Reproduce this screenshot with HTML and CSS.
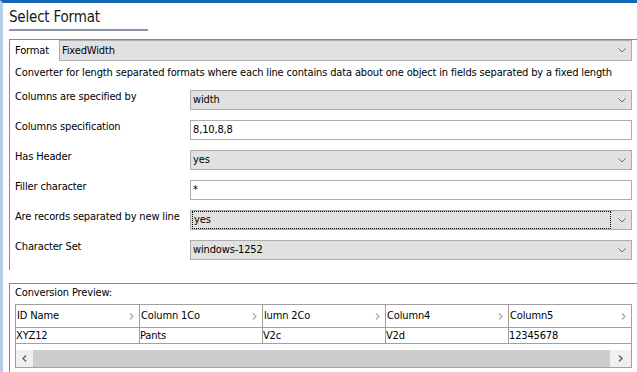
FILE: index.html
```html
<!DOCTYPE html>
<html>
<head>
<meta charset="utf-8">
<link rel="stylesheet" href="styles.css">
</head>
<body>
<div class="app">
  <h1 class="title">Select Format</h1>

  <section class="group settings">
    <div class="format-row">
      <span class="format-label">Format</span>
      <div class="select format-select">
        <span class="value">FixedWidth</span>
        <span class="arrow"><svg width="8" height="5" viewBox="0 0 8 5"><path d="M0.5 0.5 L4 4 L7.5 0.5" fill="none" stroke="#6a6a6a" stroke-width="1"/></svg></span>
      </div>
    </div>
    <p class="desc">Converter for length separated formats where each line contains data about one object in fields separated by a fixed length</p>

    <div class="form">
      <label class="label">Columns are specified by</label>
      <div class="select">
        <span class="value">width</span>
        <span class="arrow"><svg width="8" height="5" viewBox="0 0 8 5"><path d="M0.5 0.5 L4 4 L7.5 0.5" fill="none" stroke="#6a6a6a" stroke-width="1"/></svg></span>
      </div>

      <label class="label">Columns specification</label>
      <div class="input">8,10,8,8</div>

      <label class="label">Has Header</label>
      <div class="select">
        <span class="value">yes</span>
        <span class="arrow"><svg width="8" height="5" viewBox="0 0 8 5"><path d="M0.5 0.5 L4 4 L7.5 0.5" fill="none" stroke="#6a6a6a" stroke-width="1"/></svg></span>
      </div>

      <label class="label">Filler character</label>
      <div class="input">*</div>

      <label class="label">Are records separated by new line</label>
      <div class="select focused">
        <span class="value">yes</span>
        <span class="arrow"><svg width="8" height="5" viewBox="0 0 8 5"><path d="M0.5 0.5 L4 4 L7.5 0.5" fill="none" stroke="#6a6a6a" stroke-width="1"/></svg></span>
      </div>

      <label class="label">Character Set</label>
      <div class="select">
        <span class="value">windows-1252</span>
        <span class="arrow"><svg width="8" height="5" viewBox="0 0 8 5"><path d="M0.5 0.5 L4 4 L7.5 0.5" fill="none" stroke="#6a6a6a" stroke-width="1"/></svg></span>
      </div>
    </div>
  </section>

  <section class="group preview">
    <div class="preview-title">Conversion Preview:</div>
    <div class="table">
      <div class="row head">
        <div class="cell"><span>ID Name</span><svg class="hchev" width="5" height="7" viewBox="0 0 5 7"><path d="M1 0.5 L4 3.5 L1 6.5" fill="none" stroke="#a8a8a8" stroke-width="1.2"/></svg></div>
        <div class="cell"><span>Column 1Co</span><svg class="hchev" width="5" height="7" viewBox="0 0 5 7"><path d="M1 0.5 L4 3.5 L1 6.5" fill="none" stroke="#a8a8a8" stroke-width="1.2"/></svg></div>
        <div class="cell"><span>lumn 2Co</span><svg class="hchev" width="5" height="7" viewBox="0 0 5 7"><path d="M1 0.5 L4 3.5 L1 6.5" fill="none" stroke="#a8a8a8" stroke-width="1.2"/></svg></div>
        <div class="cell"><span>Column4</span><svg class="hchev" width="5" height="7" viewBox="0 0 5 7"><path d="M1 0.5 L4 3.5 L1 6.5" fill="none" stroke="#a8a8a8" stroke-width="1.2"/></svg></div>
        <div class="cell"><span>Column5</span><svg class="hchev" width="5" height="7" viewBox="0 0 5 7"><path d="M1 0.5 L4 3.5 L1 6.5" fill="none" stroke="#a8a8a8" stroke-width="1.2"/></svg></div>
      </div>
      <div class="row data">
        <div class="cell">XYZ12</div>
        <div class="cell">Pants</div>
        <div class="cell">V2c</div>
        <div class="cell">V2d</div>
        <div class="cell">12345678</div>
      </div>
      <div class="spacer"></div>
      <div class="scrollbar">
        <span class="sbtn"><svg width="5" height="7" viewBox="0 0 5 7"><path d="M4 0.5 L1 3.5 L4 6.5" fill="none" stroke="#606060" stroke-width="1.4"/></svg></span>
        <span class="track"></span>
        <span class="sbtn right"><svg width="5" height="7" viewBox="0 0 5 7"><path d="M1 0.5 L4 3.5 L1 6.5" fill="none" stroke="#606060" stroke-width="1.4"/></svg></span>
      </div>
    </div>
  </section>
</div>
</body>
</html>
```

FILE: styles.css
```css
* { box-sizing: border-box; }

html, body {
  margin: 0;
  padding: 0;
  background: #ffffff;
  overflow: hidden;
}

body {
  font-family: "DejaVu Sans Condensed", "DejaVu Sans", sans-serif;
  font-stretch: condensed;
  font-size: 11px;
  letter-spacing: -0.15px;
  color: #000000;
}

.app {
  width: 637px;
  height: 372px;
  border-top: 3px solid #1565b5;
  border-left: 3px solid #b5cde8;
  padding-left: 6px;
  overflow: hidden;
}

.title {
  margin: 0;
  width: 139px;
  padding: 4px 0 2px 0;
  font-size: 15px;
  font-weight: normal;
  line-height: 20px;
  letter-spacing: -0.2px;
  color: #1a1a1a;
  white-space: nowrap;
  border-bottom: 2px solid #8a94a6;
}

.group {
  border-top: 1px solid #8a8a8a;
  border-left: 1px solid #8a8a8a;
}

.settings {
  margin-top: 8px;
  height: 231px;
  padding: 0 0 0 5px;
}

.format-row {
  display: flex;
  align-items: center;
  height: 21px;
}

.format-label {
  width: 44px;
  line-height: 14px;
}

.select, .input {
  width: 442px;
  height: 20px;
  border: 1px solid #adadad;
  display: flex;
  align-items: center;
  line-height: 14px;
}

.select {
  background: #e1e1e1;
}

.input {
  background: #ffffff;
  padding-left: 2px;
}

.format-select {
  width: 573px;
  height: 21px;
}

.select .value {
  flex: 1;
  padding-left: 2px;
  white-space: nowrap;
}

.select .arrow {
  width: 20px;
  display: flex;
  justify-content: center;
  align-items: center;
  padding-left: 2px;
}

.select .arrow svg { display: block; }

.select.focused .value {
  margin-left: 1px;
  padding-left: 1px;
  height: 18px;
  line-height: 16px;
  border: 1px dotted #000000;
}

.desc {
  margin: 5px 0 0 0;
  line-height: 14px;
  white-space: nowrap;
}

.form {
  margin-top: 10px;
  display: grid;
  grid-template-columns: 175px 442px;
  grid-auto-rows: 20px;
  row-gap: 10px;
}

.label {
  line-height: 14px;
  white-space: nowrap;
}

.preview {
  margin-top: 13px;
  height: 100px;
  padding-left: 5px;
}

.preview-title {
  line-height: 14px;
  padding-top: 2px;
  margin-bottom: 4px;
}

.table {
  width: 617px;
  border: 1px solid #a0a0a0;
}

.row {
  display: grid;
  grid-template-columns: 124px 123px 123px 123px 122px;
}

.row.head {
  height: 23px;
  border-bottom: 1px solid #a0a0a0;
}

.row.data {
  height: 16px;
  border-bottom: 1px solid #a0a0a0;
}

.cell {
  border-right: 1px solid #a0a0a0;
  display: flex;
  align-items: center;
  justify-content: space-between;
  white-space: nowrap;
  overflow: hidden;
  line-height: 14px;
}

.cell:last-child { border-right: none; }

.head .cell {
  padding: 0 5px 0 1px;
}

.hchev { display: block; flex: none; }

.spacer { height: 6px; }

.scrollbar {
  display: flex;
  height: 17px;
}

.sbtn {
  width: 17px;
  background: #f0f0f0;
  display: flex;
  align-items: center;
  justify-content: center;
}

.sbtn.right { width: 21px; }

.sbtn svg { display: block; }

.track {
  flex: 1;
  background: #cdcdcd;
}
```
